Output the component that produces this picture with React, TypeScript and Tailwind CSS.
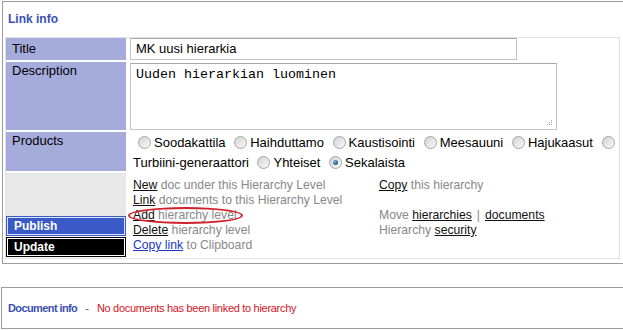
import React from "react"

const products = ["Soodakattila", "Haihduttamo", "Kaustisointi", "Meesauuni", "Hajukaasut"]

function Radio({ checked }: { checked?: boolean }) {
  return (
    <span className="relative -top-px inline-block align-middle w-[13px] h-[13px] rounded-full border border-[#a4a4a4] bg-gradient-to-br from-[#d2d2d2] to-[#fbfbfb] ml-[5px] mr-[3px]">
      {checked && (
        <span className="absolute left-[3px] top-[3px] w-[5px] h-[5px] rounded-full bg-[radial-gradient(circle_at_35%_35%,#7fb6dc,#1b4f78_75%)]" />
      )}
    </span>
  )
}

function Link({ children }: { children: React.ReactNode }) {
  return <span className="text-[#111] underline">{children}</span>
}

export default function App() {
  return (
    <div className="w-[623px] h-[330px] overflow-hidden bg-white font-['Liberation_Sans',Arial,sans-serif] text-black">
      {/* Link info box */}
      <div className="mt-px ml-[2px] w-[640px] border border-[#9c9c9c] pb-[4px]">
        <div className="h-[35px] pt-[10px] pl-[5px] text-[12px] leading-[15px] font-bold text-[#3a50b4]">Link info</div>

        <div className="ml-[2px] w-[615px] border border-[#e2e2e2] pb-px flex flex-col gap-[2px]">
          {/* Title */}
          <div className="flex h-[22px]">
            <div className="w-[120px] bg-[#a5acdc] flex items-center pl-[6px] text-[13px]">Title</div>
            <div className="flex-1 pl-[4px]">
              <div className="w-[387px] h-[22px] border border-[#c4c4c4] border-t-[#a8a8a8] pl-[5px] text-[13px] leading-[20px]">
                MK uusi hierarkia
              </div>
            </div>
          </div>

          {/* Description */}
          <div className="flex h-[68px]">
            <div className="w-[120px] bg-[#a5acdc] pl-[6px] pt-px text-[13px] leading-[15px]">Description</div>
            <div className="flex-1 pl-[4px] pt-px">
              <div className="relative w-[427px] h-[67px] border border-[#c4c4c4] border-t-[#a8a8a8]">
                <textarea
                  readOnly
                  defaultValue="Uuden hierarkian luominen"
                  className="w-full h-full resize-none outline-none pl-[5px] pt-[3px] font-['Liberation_Mono','Courier_New',monospace] text-[13.33px] leading-[15px] text-black"
                />
                <svg className="absolute right-[3px] bottom-[3px]" width="6" height="6" viewBox="0 0 6 6">
                  <rect x="4" y="0" width="1" height="1" fill="#a0a0a0" />
                  <rect x="2" y="2" width="1" height="1" fill="#a0a0a0" />
                  <rect x="4" y="2" width="1" height="1" fill="#a0a0a0" />
                  <rect x="0" y="4" width="1" height="1" fill="#a0a0a0" />
                  <rect x="2" y="4" width="1" height="1" fill="#a0a0a0" />
                  <rect x="4" y="4" width="1" height="1" fill="#a0a0a0" />
                </svg>
              </div>
            </div>
          </div>

          {/* Products */}
          <div className="flex h-[39px]">
            <div className="w-[120px] bg-[#a5acdc] pl-[6px] pt-px text-[13px] leading-[15px]">Products</div>
            <div className="flex-1 pl-[7px] pt-px text-[13px] whitespace-nowrap">
              <div className="leading-[20px]">
                {products.map((p) => (
                  <React.Fragment key={p}>
                    <Radio />
                    {p}{" "}
                  </React.Fragment>
                ))}
                <Radio />
              </div>
              <div className="leading-[20px]">
                Turbiini-generaattori <Radio />Yhteiset <Radio checked />Sekalaista
              </div>
            </div>
          </div>

          {/* Actions */}
          <div className="flex h-[84px]">
            <div className="w-[120px] flex flex-col">
              <div className="flex-1 bg-[#e8e8e8]" />
              <div className="h-[20px] bg-[#3a5ac8] p-px">
                <div className="h-full border border-[#dfe4fb] pl-[6px] flex items-center text-[12px] font-bold text-white">Publish</div>
              </div>
              <div className="h-[20px] mt-px bg-black p-px">
                <div className="h-full border border-white pl-[6px] flex items-center text-[12px] font-bold text-white">Update</div>
              </div>
            </div>
            <div className="flex-1 pl-[7px] pt-[5px] grid grid-cols-[246px_auto] text-[12.2px] leading-[15px] text-[#888]">
              <div>
                <div>
                  <Link>New</Link> doc under this Hierarchy Level
                </div>
                <div>
                  <Link>Link</Link> documents to this Hierarchy Level
                </div>
                <div>
                  <span className="relative inline-block">
                    <Link>Add</Link> hierarchy level
                    <span className="absolute -left-[5px] -right-[6px] -top-[1px] -bottom-[1px] rounded-[50%] border-2 border-[#d0202a]" />
                  </span>
                </div>
                <div>
                  <Link>Delete</Link> hierarchy level
                </div>
                <div>
                  <span className="text-[#2036c8] underline">Copy link</span> to Clipboard
                </div>
              </div>
              <div>
                <div>
                  <Link>Copy</Link> this hierarchy
                </div>
                <div className="h-[15px]" />
                <div>
                  Move <Link>hierarchies</Link>
                  <span className="mx-[5px]">|</span>
                  <Link>documents</Link>
                </div>
                <div>
                  Hierarchy <Link>security</Link>
                </div>
              </div>
            </div>
          </div>
        </div>
      </div>

      {/* Document info box */}
      <div className="mt-[23px] ml-px w-[640px] h-[42px] border border-[#9c9c9c] flex items-center pl-[6px] text-[11px]">
        <span className="font-bold tracking-[-0.6px] text-[#3a50b4]">Document info</span>
        <span className="mx-[8px] text-[#555]">-</span>
        <span className="tracking-[-0.3px] text-[#d4121e]">No documents has been linked to hierarchy</span>
      </div>
    </div>
  )
}
